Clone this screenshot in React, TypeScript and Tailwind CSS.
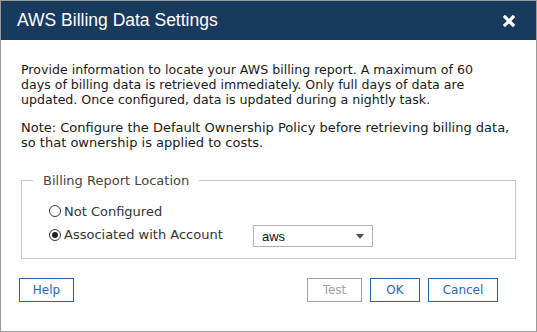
import React from "react";

const Radio: React.FC<{ checked?: boolean; label: string }> = ({ checked, label }) => (
  <label className="flex items-center h-[22px]">
    <span className="flex h-[12px] w-[12px] items-center justify-center rounded-full border border-[#333] bg-white">
      {checked && <span className="h-[6px] w-[6px] rounded-full bg-[#222]" />}
    </span>
    <span className="ml-[3px]">{label}</span>
  </label>
);

const Button: React.FC<{ label: string; width: string; disabled?: boolean }> = ({ label, width, disabled }) => (
  <button
    className={
      disabled
        ? `${width} h-[24px] border border-[#a3a3a3] text-[#a3a3a3] bg-white text-[12px]`
        : `${width} h-[24px] border border-[#2862a8] text-[#2d65ab] bg-white text-[12px]`
    }
  >
    {label}
  </button>
);

export default function App() {
  return (
    <div
      className="w-[537px] h-[332px] border border-[#9a9a9a] bg-white flex flex-col text-[#1a1a1a]"
      style={{ fontFamily: '"DejaVu Sans", Verdana, sans-serif' }}
    >
      <div className="h-[39px] bg-[#183a5d] flex items-center justify-between pl-4 pr-5 shrink-0">
        <span
          className="text-white text-[17.5px]"
          style={{ fontFamily: '"Liberation Sans", Arial, sans-serif' }}
        >
          AWS Billing Data Settings
        </span>
        <svg width="12" height="12" viewBox="0 0 12 12" className="mr-[1px]">
          <path d="M2 2 L10 10 M10 2 L2 10" stroke="#fff" strokeWidth="3.2" strokeLinecap="square" />
        </svg>
      </div>

      <div className="px-5 pt-[22px] text-[13px] leading-[15px]">
        <p className="text-[12.6px]">
          Provide information to locate your AWS billing report. A maximum of 60
          <br />
          days of billing data is retrieved immediately. Only full days of data are
          <br />
          updated. Once configured, data is updated during a nightly task.
        </p>
        <p className="mt-[13px]">
          Note: Configure the Default Ownership Policy before retrieving billing data, so that ownership
          is applied to costs.
        </p>

        <fieldset className="mt-[23px] border border-[#c8c8c8] h-[86px] text-[#333]">
          <legend className="ml-[11px] px-[10px] text-[#444]">Billing Report Location</legend>
          <div className="flex flex-col pl-[27px] pt-[12px]">
            <Radio label="Not Configured" />
            <div className="flex items-center">
              <div className="w-[204px]">
                <Radio checked label="Associated with Account" />
              </div>
              <div
                className="w-[120px] h-[22px] mt-[3px] border border-[#b5b5b5] flex items-center justify-between pl-[8px] pr-[8px] text-[13px] text-[#111]"
                style={{ fontFamily: '"Liberation Sans", Arial, sans-serif' }}
              >
                <span>aws</span>
                <svg width="8" height="5" viewBox="0 0 8 5">
                  <path d="M0 0 L8 0 L4 5 Z" fill="#555" />
                </svg>
              </div>
            </div>
          </div>
        </fieldset>
      </div>

      <div className="flex justify-between pl-[18px] pr-[38px] mt-[19px]">
        <Button label="Help" width="w-[55px]" />
        <div className="flex gap-[8px]">
          <Button label="Test" width="w-[55px]" disabled />
          <Button label="OK" width="w-[50px]" />
          <Button label="Cancel" width="w-[70px]" />
        </div>
      </div>
    </div>
  );
}
